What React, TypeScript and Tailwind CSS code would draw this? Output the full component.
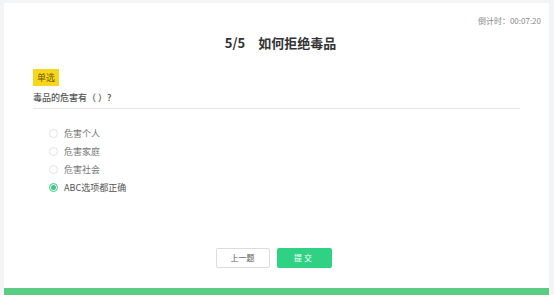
import React from "react";

const font = { fontFamily: '"Noto Sans CJK SC", "Noto Sans", sans-serif' };

function Radio({ checked }: { checked?: boolean }) {
  return (
    <span
      className={
        "flex h-[9px] w-[9px] items-center justify-center rounded-full border " +
        (checked ? "border-[#3cc886]" : "border-[#e2e2e2]")
      }
    >
      {checked && <span className="h-[5px] w-[5px] rounded-full bg-[#3cc886]" />}
    </span>
  );
}

export default function App() {
  const options = [
    { label: "危害个人" },
    { label: "危害家庭" },
    { label: "危害社会" },
    { label: "ABC选项都正确", checked: true },
  ];
  return (
    <div className="h-[295px] w-[554px] bg-[#f3f4f6] pl-[4px] pr-[5px] pt-[3px]" style={font}>
      <div className="flex h-[292px] flex-col bg-white">
        <div className="flex justify-end pr-[8px] pt-[13px] text-[8px] leading-[10px] text-[#888]">
          倒计时：00:07:20
        </div>
        <div className="mt-[8px] pl-[8px] text-center text-[13px] font-bold leading-[18px] text-[#333]">
          5/5<span className="ml-[13px]">如何拒绝毒品</span>
        </div>
        <div className="ml-[29px] mr-[29px] mt-[10px]">
          <span className="inline-block bg-[#f8d61c] px-[4px] text-[9px] leading-[17px] text-[#6b5a00]">
            单选
          </span>
          <div className="border-b border-[#e4e4e4] pb-[4px] pt-[5px] text-[9px] font-medium leading-[13px] text-[#555]">
            毒品的危害有（ ）?
          </div>
        </div>
        <div className="ml-[45px] mt-[18px] flex flex-col gap-[5px]">
          {options.map((o) => (
            <div
              key={o.label}
              className={
                "flex items-center gap-[6px] text-[9px] leading-[13px] " +
                (o.checked ? "text-[#555]" : "text-[#777]")
              }
            >
              <Radio checked={o.checked} />
              <span>{o.label}</span>
            </div>
          ))}
        </div>
        <div className="mt-auto mb-[20px] flex justify-center gap-[7px] pr-[6px]">
          <button className="h-[20px] w-[54px] rounded-[2px] border border-[#dcdcdc] bg-white text-[8px] text-[#555]">
            上一题
          </button>
          <button className="h-[20px] w-[55px] rounded-[2px] bg-[#2fd283] text-[8px] tracking-[2px] text-white">
            提交
          </button>
        </div>
        <div className="h-[7px] bg-[#5acd83]" />
      </div>
    </div>
  );
}
